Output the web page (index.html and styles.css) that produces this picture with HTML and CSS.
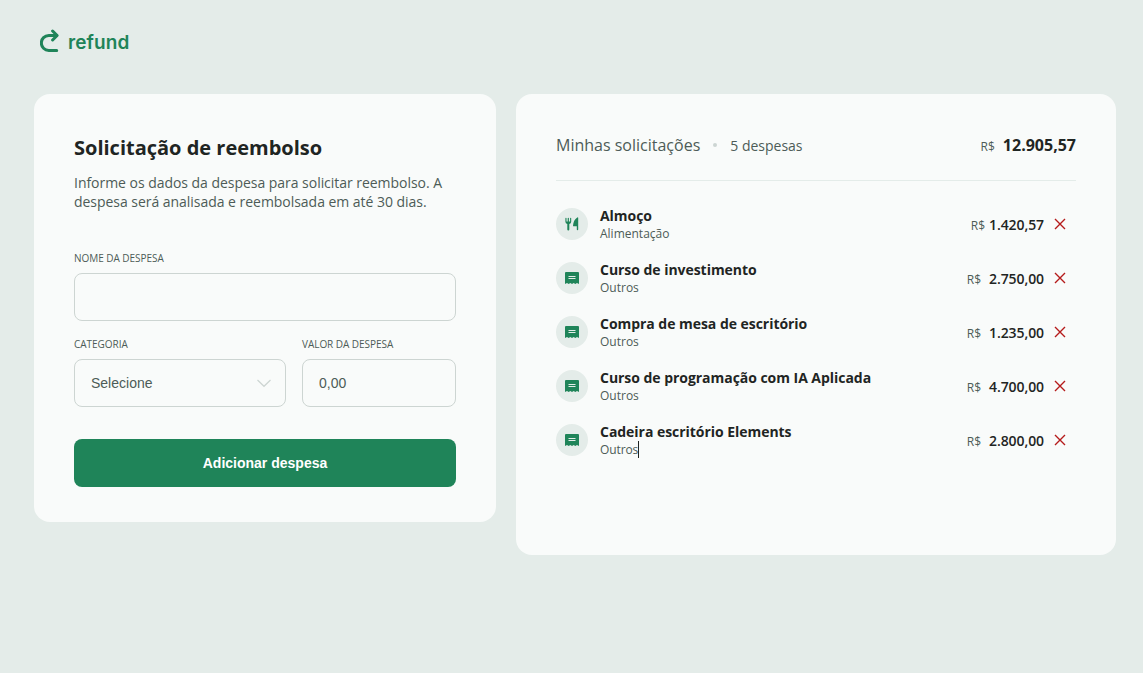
FILE: index.html
```html
<!DOCTYPE html>
<html lang="pt-BR">
<head>
  <meta charset="UTF-8" />
  <meta name="viewport" content="width=device-width, initial-scale=1.0" />
  <title>Refund</title>
  <link rel="stylesheet" href="styles.css">
</head>
<body>
  <svg class="sprite" width="0" height="0">
    <symbol id="icon-food" viewBox="0 0 16 16">
      <path d="M1.400 2.300v3.400a2.600 2.600 0 0 0 1.900 2.400v5.500a1 1 0 0 0 2 0V8.100a2.600 2.600 0 0 0 1.900-2.400V2.300a.5.5 0 0 0-1.100 0v3.200H4.900V2.300a.5.5 0 0 0-1.200 0v3.200H2.500V2.300a.5.5 0 0 0-1.100 0z" />
      <path d="M14.200 1.800v11.800a.7.700 0 0 1-1.400 0v-3.300H9.600a.6.600 0 0 1-.6-.6C9.300 6 10.600 3 13.300 1.400a.6.600 0 0 1 .9.400z" />
    </symbol>
    <symbol id="icon-other" viewBox="0 0 16 16">
      <path fill-rule="evenodd" d="M2 2h12a1 1 0 0 1 1 1v11l-2-1-1.700 1-1.600-1-1.700 1-1.700-1-1.600 1-1.700-1-2 1V3a1 1 0 0 1 1-1zM4.500 6v1h7V6zM4.500 8v1h7V8z" />
    </symbol>
    <symbol id="icon-remove" viewBox="0 0 12 12">
      <path d="M1 1l10 10M11 1L1 11" />
    </symbol>
  </svg>

  <header class="logo">
    <svg width="20" height="24" viewBox="0 0 20 24">
      <path d="M16.700 21.400H8.800A7.400 7.400 0 0 1 8.800 6.500H16.500" />
      <path d="M12.600 2l4.500 4.500-4.500 4.500" />
    </svg>
    <span>refund</span>
  </header>

  <main>
    <form class="card request">
      <h1>Solicitação de reembolso</h1>
      <p class="intro">Informe os dados da despesa para solicitar reembolso. A despesa será analisada e reembolsada em até 30 dias.</p>

      <div class="field">
        <label for="expense">Nome da despesa</label>
        <input type="text" id="expense" />
      </div>

      <div class="row">
        <div class="field category">
          <label for="category">Categoria</label>
          <div class="select-wrapper">
            <select id="category">
              <option value="">Selecione</option>
              <option value="food">Alimentação</option>
              <option value="others">Outros</option>
            </select>
            <svg width="16" height="16" viewBox="0 0 16 16">
              <path d="M1.500 5L8 11.300 14.500 5" />
            </svg>
          </div>
        </div>
        <div class="field amount">
          <label for="amount">Valor da despesa</label>
          <input type="text" id="amount" placeholder="0,00" />
        </div>
      </div>

      <button type="submit">Adicionar despesa</button>
    </form>

    <section class="card expenses">
      <div class="summary">
        <h2>Minhas solicitações</h2>
        <i class="dot"></i>
        <span class="count">5 despesas</span>
        <div class="total"><small>R$</small>12.905,57</div>
      </div>

      <ul>
        <li>
          <span class="icon"><svg width="16" height="16"><use href="#icon-food" /></svg></span>
          <div class="info"><strong>Almoço</strong><span>Alimentação</span></div>
          <span class="value tight"><small>R$</small>1.420,57</span>
          <svg class="remove" width="12" height="12"><use href="#icon-remove" /></svg>
        </li>
        <li>
          <span class="icon"><svg width="16" height="16"><use href="#icon-other" /></svg></span>
          <div class="info"><strong>Curso de investimento</strong><span>Outros</span></div>
          <span class="value"><small>R$</small>2.750,00</span>
          <svg class="remove" width="12" height="12"><use href="#icon-remove" /></svg>
        </li>
        <li>
          <span class="icon"><svg width="16" height="16"><use href="#icon-other" /></svg></span>
          <div class="info"><strong>Compra de mesa de escritório</strong><span>Outros</span></div>
          <span class="value"><small>R$</small>1.235,00</span>
          <svg class="remove" width="12" height="12"><use href="#icon-remove" /></svg>
        </li>
        <li>
          <span class="icon"><svg width="16" height="16"><use href="#icon-other" /></svg></span>
          <div class="info"><strong>Curso de programação com IA Aplicada</strong><span>Outros</span></div>
          <span class="value"><small>R$</small>4.700,00</span>
          <svg class="remove" width="12" height="12"><use href="#icon-remove" /></svg>
        </li>
        <li>
          <span class="icon"><svg width="16" height="16"><use href="#icon-other" /></svg></span>
          <div class="info"><strong>Cadeira escritório Elements</strong><span class="caret">Outros</span></div>
          <span class="value"><small>R$</small>2.800,00</span>
          <svg class="remove" width="12" height="12"><use href="#icon-remove" /></svg>
        </li>
      </ul>
    </section>
  </main>
</body>
</html>
```
FILE: styles.css
```css
:root {
  --green: #1f8459;
  --bg: #e4ece9;
  --surface: #f9fbfa;
  --text: #1f2523;
  --muted: #4d5c57;
  --line: #cdd5d2;
  --red: #b51b1b;
}

* {
  margin: 0;
  padding: 0;
  box-sizing: border-box;
}

body {
  background: var(--bg);
  color: var(--text);
  font-family: "Open Sans", sans-serif;
  font-size: 14px;
  padding: 28px 27px 0 34px;
}

.sprite {
  position: absolute;
}

.logo {
  display: flex;
  align-items: center;
  gap: 8px;
  height: 26px;
  padding-left: 6px;
  margin-bottom: 40px;
  color: var(--green);
  font: 600 19px/26px Inter, sans-serif;
  letter-spacing: 0.1px;
}

.logo span {
  padding-top: 3px;
}

.logo svg {
  fill: none;
  stroke: var(--green);
  stroke-width: 3;
  stroke-linecap: round;
  stroke-linejoin: round;
}

main {
  display: flex;
  align-items: flex-start;
  gap: 20px;
}

.card {
  background: var(--surface);
  border-radius: 16px;
  padding: 40px;
}

.request {
  width: 462px;
  height: 428px;
}

h1 {
  font-size: 20px;
  font-weight: 700;
  line-height: 27px;
}

.intro {
  color: var(--muted);
  line-height: 19px;
  letter-spacing: -0.035px;
  margin: 12px 0 40px;
}

.field {
  display: flex;
  flex-direction: column;
  gap: 8px;
}

label {
  color: var(--muted);
  font-size: 10px;
  line-height: 14px;
  letter-spacing: -0.04px;
  text-transform: uppercase;
}

input, select {
  width: 100%;
  height: 48px;
  padding: 0 16px;
  border: 1px solid var(--line);
  border-radius: 8px;
  background: transparent;
  color: var(--muted);
  font-family: "Liberation Sans", Arial, sans-serif;
  font-size: 14px;
  outline: none;
}

input::placeholder {
  color: var(--muted);
}

select {
  appearance: none;
}

.row {
  display: flex;
  gap: 16px;
  margin: 16px 0 32px;
}

.category {
  width: 212px;
}

.amount {
  flex: 1;
}

.select-wrapper {
  position: relative;
}

.select-wrapper svg {
  position: absolute;
  right: 14px;
  top: 16px;
  fill: none;
  stroke: var(--line);
  stroke-width: 1.2;
  pointer-events: none;
}

button {
  width: 100%;
  height: 48px;
  border: none;
  border-radius: 8px;
  background: var(--green);
  color: #fff;
  font: 700 14px "Liberation Sans", Arial, sans-serif;
  cursor: pointer;
}

.expenses {
  width: 600px;
  height: 461px;
}

.summary {
  display: flex;
  align-items: center;
  height: 47px;
  padding-bottom: 24px;
  border-bottom: 1px solid var(--bg);
  margin-bottom: 24px;
}

h2 {
  color: var(--muted);
  font-size: 16px;
  font-weight: 400;
}

.dot {
  width: 4px;
  height: 4px;
  border-radius: 50%;
  background: var(--line);
  margin: 0 13px;
}

.count {
  color: var(--muted);
}

.total {
  margin-left: auto;
  font-size: 16px;
  font-weight: 700;
}

small {
  color: var(--muted);
  font-size: 12px;
  font-weight: 400;
  margin-right: 8px;
}

ul {
  list-style: none;
  display: flex;
  flex-direction: column;
  gap: 16px;
}

li {
  display: flex;
  align-items: center;
  height: 38px;
}

.icon {
  display: flex;
  align-items: center;
  justify-content: center;
  width: 32px;
  height: 32px;
  border-radius: 50%;
  background: var(--bg);
  fill: var(--green);
}

.info {
  flex: 1;
  display: flex;
  flex-direction: column;
  align-items: flex-start;
  margin-left: 12px;
}

.info strong {
  line-height: 19px;
  letter-spacing: -0.04px;
}

.info span {
  color: var(--muted);
  font-size: 12px;
  line-height: 17px;
}

.info .caret {
  border-right: 1px solid var(--text);
  letter-spacing: -0.1px;
}

.value {
  font-weight: 600;
  letter-spacing: -0.08px;
}

.tight small {
  margin-right: 4px;
}

.remove {
  margin: 0 10px;
  stroke: var(--red);
  stroke-width: 1.4;
}
```
